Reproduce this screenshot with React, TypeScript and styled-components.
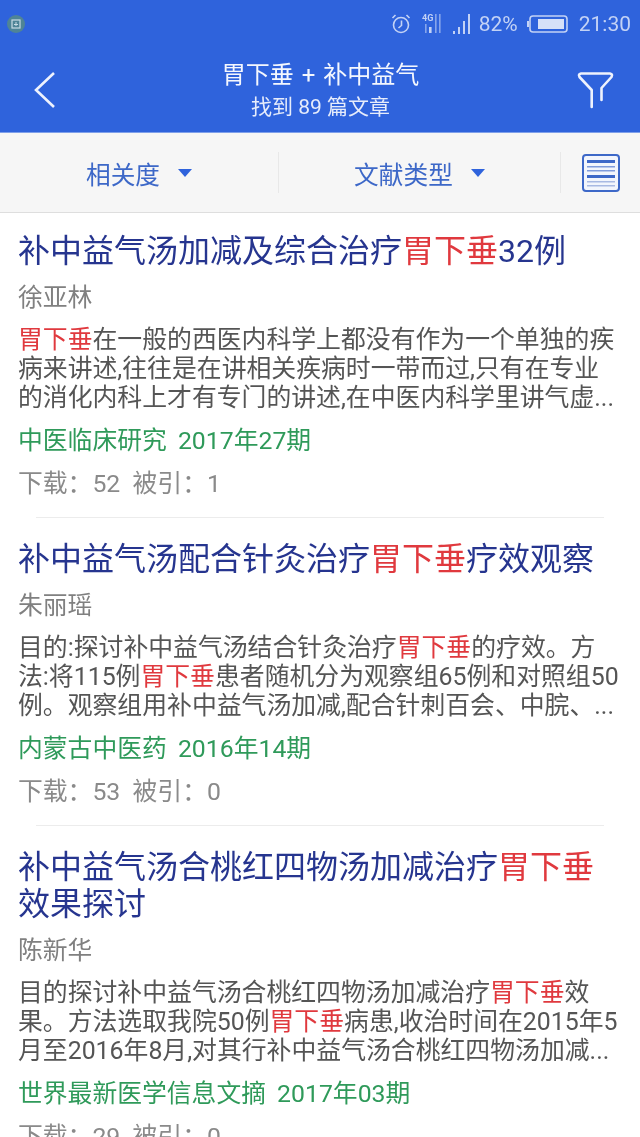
import React from "react";
import styled, { createGlobalStyle } from "styled-components";

const Global = createGlobalStyle`
  html, body { margin: 0; padding: 0; background: #fff; }
  body { font-family: Roboto, "Noto Sans CJK SC", sans-serif; }
`;

const Page = styled.div`
  width: 640px;
  height: 1137px;
  overflow: hidden;
  background: #fff;
  filter: blur(0.4px);
`;

const Top = styled.header`
  background: #2f63dc;
  height: 132px;
  border-bottom: 1px solid #7fa0ea;
  display: flex;
  flex-direction: column;
`;

const StatusBar = styled.div`
  height: 44px;
  display: flex;
  align-items: center;
  padding: 3px 9px 0 7px;
  box-sizing: border-box;
  color: #c3d2f5;
`;

const NoticeDot = styled.div`
  width: 18px;
  height: 18px;
  border-radius: 50%;
  background: #4f8496;
  display: flex;
  align-items: center;
  justify-content: center;
  margin-right: auto;
`;

const StatusIcons = styled.div`
  display: flex;
  align-items: center;
`;

const StatusText = styled.span<{ $ml: number }>`
  font-size: 21px;
  line-height: 24px;
  margin-left: ${(p) => p.$ml}px;
`;

const SvgSlot = styled.svg<{ $ml: number }>`
  display: block;
  flex: none;
  margin-left: ${(p) => p.$ml}px;
`;

const NavBar = styled.div`
  flex: 1;
  display: flex;
  align-items: flex-start;
  justify-content: space-between;
  padding: 0 24px 0 33px;
  color: #fff;
`;

const NavTitle = styled.div`
  flex: 1;
  text-align: center;
  padding: 14px 0 0 8px;
`;

const NavMain = styled.div`
  font-size: 24px;
  line-height: 34px;
  color: #f4f7fe;
  word-spacing: 2px;
`;

const NavSub = styled.div`
  font-size: 21px;
  line-height: 26px;
  color: #e6ecfb;
  margin-top: 2px;
`;

const NavIcon = styled.svg<{ $mt: number }>`
  display: block;
  flex: none;
  margin-top: ${(p) => p.$mt}px;
`;

const FilterBar = styled.div`
  height: 79px;
  background: #f6f6f6;
  border-bottom: 1px solid #dedede;
  display: flex;
  align-items: center;
`;

const FilterCell = styled.div<{ $w: number }>`
  width: ${(p) => p.$w}px;
  height: 41px;
  display: flex;
  align-items: center;
  justify-content: center;
  gap: 18px;
  box-sizing: border-box;
  border-right: 1px solid #e8e8e8;
  color: #3d68c8;
  font-size: 24.7px;
`;

const Caret = styled.i`
  display: block;
  width: 0;
  height: 0;
  border-left: 7.5px solid transparent;
  border-right: 7.5px solid transparent;
  border-top: 8px solid #2f63dc;
`;

const ViewToggle = styled.div`
  flex: 1;
  display: flex;
  justify-content: center;
`;

const Item = styled.article`
  margin: 0 18px;
  padding: 23px 0 16px;
  &:first-of-type {
    padding-top: 20px;
  }
`;

const Title = styled.h2`
  margin: 0;
  font-size: 32px;
  line-height: 37px;
  font-weight: 400;
  color: #26358f;
`;

const Author = styled.div`
  font-size: 24.8px;
  line-height: 34px;
  color: #808080;
  margin-top: 11px;
`;

const Abstract = styled.p`
  margin: 10px 0 0;
  font-size: 24.85px;
  line-height: 29px;
  color: #555;
  white-space: nowrap;
`;

const Journal = styled.div`
  font-size: 24.8px;
  line-height: 34px;
  color: #2f9a5a;
  margin-top: 12px;
  word-spacing: 5px;
`;

const Stats = styled.div`
  font-size: 24.8px;
  line-height: 34px;
  color: #8a8a8a;
  margin-top: 9px;
  white-space: pre;
`;

const H = styled.span`
  color: #e0393e;
`;

const Divider = styled.hr`
  border: 0;
  height: 1px;
  background: #ececec;
  margin: 0 36px;
`;

const items = [
  {
    title: <>补中益气汤加减及综合治疗<H>胃下垂</H>32例</>,
    author: "徐亚林",
    body: [
      <><H>胃下垂</H>在一般的西医内科学上都没有作为一个单独的疾</>,
      <>病来讲述,往往是在讲相关疾病时一带而过,只有在专业</>,
      <>的消化内科上才有专门的讲述,在中医内科学里讲气虚...</>,
    ],
    journal: "中医临床研究 2017年27期",
    stats: "下载：52  被引：1",
  },
  {
    title: <>补中益气汤配合针灸治疗<H>胃下垂</H>疗效观察</>,
    author: "朱丽瑶",
    body: [
      <>目的:探讨补中益气汤结合针灸治疗<H>胃下垂</H>的疗效。方</>,
      <>法:将115例<H>胃下垂</H>患者随机分为观察组65例和对照组50</>,
      <>例。观察组用补中益气汤加减,配合针刺百会、中脘、...</>,
    ],
    journal: "内蒙古中医药 2016年14期",
    stats: "下载：53  被引：0",
  },
  {
    title: <>补中益气汤合桃红四物汤加减治疗<H>胃下垂</H><br />效果探讨</>,
    author: "陈新华",
    body: [
      <>目的探讨补中益气汤合桃红四物汤加减治疗<H>胃下垂</H>效</>,
      <>果。方法选取我院50例<H>胃下垂</H>病患,收治时间在2015年5</>,
      <>月至2016年8月,对其行补中益气汤合桃红四物汤加减...</>,
    ],
    journal: "世界最新医学信息文摘 2017年03期",
    stats: "下载：29  被引：0",
  },
];

export default function App() {
  return (
    <Page>
      <Global />
      <Top>
        <StatusBar>
          <NoticeDot>
            <svg width="10" height="10" viewBox="0 0 10 10" fill="none" stroke="#c8dbe4" strokeWidth="1.2">
              <rect x="1" y="1" width="8" height="8" />
              <path d="M3 5.5h4M5 3v4" strokeWidth="1" />
            </svg>
          </NoticeDot>
          <StatusIcons>
            <SvgSlot $ml={0} width="20" height="22" viewBox="0 0 20 22" fill="none" stroke="#c3d2f5" strokeWidth="1.6">
              <circle cx="10" cy="12" r="7.5" />
              <path d="M10.5 7.5v5l-3 2.5M1.5 5l3-3M18.5 5l-3-3" />
            </SvgSlot>
            <SvgSlot $ml={11} width="20" height="22" viewBox="0 0 20 22" fill="#c3d2f5">
              <text x="0" y="8" fontSize="9" fontWeight="700" fontFamily="Roboto">4G</text>
              <rect x="3" y="11" width="1.6" height="9" opacity=".6" />
              <rect x="7" y="14" width="2.6" height="6" />
              <rect x="13" y="1" width="1.6" height="19" opacity=".6" />
              <rect x="17" y="1" width="1.6" height="19" opacity=".6" />
            </SvgSlot>
            <SvgSlot $ml={10} width="19" height="22" viewBox="0 0 19 22" fill="#c3d2f5">
              <rect x="1" y="18" width="2" height="3" />
              <rect x="6" y="14" width="2" height="7" />
              <rect x="11" y="8" width="2" height="13" />
              <rect x="16" y="1" width="2" height="20" />
            </SvgSlot>
            <StatusText $ml={8}>82%</StatusText>
            <SvgSlot $ml={9} width="41" height="20" viewBox="0 0 41 20" fill="none">
              <rect x="0" y="7" width="2" height="6" fill="#c3d2f5" />
              <rect x="3" y="2" width="37" height="16" rx="3" stroke="#c3d2f5" strokeWidth="1.6" />
              <rect x="11" y="5" width="26" height="10" fill="#d6e0f8" />
            </SvgSlot>
            <StatusText $ml={11}>21:30</StatusText>
          </StatusIcons>
        </StatusBar>
        <NavBar>
          <NavIcon $mt={27} width="24" height="38" viewBox="0 0 24 38" fill="none" stroke="#eef2fd" strokeWidth="2.6">
            <path d="M21 2 3 19l18 17" />
          </NavIcon>
          <NavTitle>
            <NavMain>胃下垂 + 补中益气</NavMain>
            <NavSub>找到 89 篇文章</NavSub>
          </NavTitle>
          <NavIcon $mt={26} width="40" height="40" viewBox="0 0 40 40" fill="none" stroke="#eef2fd" strokeWidth="2.6" strokeLinejoin="round" strokeLinecap="round">
            <path d="M15.7 37V20L3.5 7Q2 4 5 3.5H34Q37 4 35.5 7L25.5 18V30" />
          </NavIcon>
        </NavBar>
      </Top>
      <FilterBar>
        <FilterCell $w={279}>相关度<Caret /></FilterCell>
        <FilterCell $w={282}>文献类型<Caret /></FilterCell>
        <ViewToggle>
          <svg width="38" height="38" viewBox="0 0 38 38" fill="none">
            <rect x="1" y="1" width="36" height="36" rx="3" stroke="#3d68c8" strokeWidth="2" fill="#f2f5fc" />
            <rect x="5" y="6" width="28" height="3" fill="#3d68c8" />
            <rect x="5" y="12" width="28" height="1.5" fill="#7f9bdb" />
            <rect x="5" y="16" width="28" height="1.5" fill="#7f9bdb" />
            <rect x="5" y="21" width="28" height="3" fill="#3d68c8" />
            <rect x="5" y="27" width="28" height="1.5" fill="#a8b9e2" />
            <rect x="5" y="31" width="28" height="1.5" fill="#a8b9e2" />
          </svg>
        </ViewToggle>
      </FilterBar>
      {items.map((it, i) => (
        <React.Fragment key={i}>
          {i > 0 && <Divider />}
          <Item>
            <Title>{it.title}</Title>
            <Author>{it.author}</Author>
            <Abstract>
              {it.body.map((line, j) => (
                <React.Fragment key={j}>
                  {line}
                  <br />
                </React.Fragment>
              ))}
            </Abstract>
            <Journal>{it.journal}</Journal>
            <Stats>{it.stats}</Stats>
          </Item>
        </React.Fragment>
      ))}
    </Page>
  );
}
